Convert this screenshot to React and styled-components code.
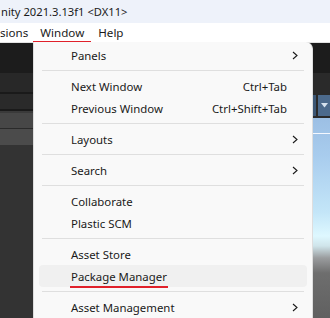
import React from "react";
import styled, { createGlobalStyle } from "styled-components";

const GlobalStyle = createGlobalStyle`
  body {
    margin: 0;
    overflow: hidden;
    font-family: "Noto Sans", "Liberation Sans", sans-serif;
  }
`;

const Screen = styled.div`
  position: relative;
  width: 330px;
  height: 318px;
  overflow: hidden;
  background-color: #333333;
  display: flex;
  flex-direction: column;
`;

const TitleBar = styled.div`
  height: 23px;
  background-color: #eef2fa;
  color: #1a1a1a;
  font-size: 11.2px;
  line-height: 23px;
  padding-left: 1px;
  white-space: nowrap;
`;

const MenuBar = styled.div`
  height: 19px;
  background-color: #ffffff;
  border-bottom: 1px solid #e2e2e2;
  display: flex;
  align-items: center;
  font-size: 11.6px;
  color: #1a1a1a;
`;

const MenuBarItem = styled.div`
  position: relative;
  height: 100%;
  display: flex;
  align-items: center;
  padding: 0 7px;
  &:first-child {
    padding-left: 0;
    padding-right: 5px;
  }
  &::after {
    content: "";
    display: ${(props) => (props.marked ? "block" : "none")};
    position: absolute;
    left: 0;
    right: 0;
    bottom: -1px;
    height: 2px;
    background-color: #e0202a;
  }
`;

const Editor = styled.div`
  flex: 1;
  display: flex;
  flex-direction: column;
`;

const Toolbar = styled.div`
  height: 30px;
  background-color: #1c1c1c;
`;

const Panels = styled.div`
  flex: 1;
  display: flex;
`;

const Hierarchy = styled.div`
  width: 33px;
  display: flex;
  flex-direction: column;
  background-color: #333333;
`;

const Stripe = styled.div`
  height: ${(props) => props.h}px;
  background-color: ${(props) => props.color};
`;

const Middle = styled.div`
  flex: 1;
  background-color: #282828;
`;

const SceneView = styled.div`
  width: 17px;
  display: flex;
  flex-direction: column;
`;

const SceneTabs = styled.div`
  height: 20px;
  background-color: #2a2a2a;
`;

const SceneToolbar = styled.div`
  height: 25px;
  background-color: #2a2a2a;
  display: flex;
  align-items: stretch;
  padding: 2px 0;
  box-sizing: border-box;
  gap: 2px;
`;

const ToolButton = styled.div`
  width: ${(props) => props.w}px;
  background-color: ${(props) => props.color};
  display: flex;
  align-items: center;
  justify-content: center;
`;

const Sky = styled.div`
  flex: 1;
  background: linear-gradient(
    to bottom,
    #9cbfe4 0px,
    #a9cdee 40px,
    #c4e6f8 95px,
    #def8ff 118px,
    #cfe4ea 128px,
    #9a9c9e 140px,
    #6e6e6e 155px,
    #606060 200px
  );
`;

const Horizon = styled.div`
  height: 1px;
  margin-top: 15px;
  background-color: #f4f8ff;
`;

const Menu = styled.div`
  position: absolute;
  left: 33px;
  top: 42px;
  width: 280px;
  height: 290px;
  box-sizing: border-box;
  background-color: #f9f9f9;
  border: 1px solid #dedede;
  border-top: none;
  border-radius: 0 7px 0 0;
  padding-top: 2px;
  font-size: 11.4px;
  color: #1a1a1a;
`;

const Item = styled.div`
  height: 22px;
  margin: 0 5px;
  border-radius: 4px;
  display: flex;
  align-items: center;
  padding-left: 32px;
  background-color: ${(props) => (props.hovered ? "#f0f0f0" : "transparent")};
`;

const Label = styled.span`
  flex: 1;
  white-space: nowrap;
`;

const LabelText = styled.span`
  position: relative;
  &::after {
    content: "";
    display: ${(props) => (props.marked ? "block" : "none")};
    position: absolute;
    left: -1px;
    right: -1px;
    bottom: -4px;
    height: 2px;
    background-color: #e0202a;
  }
`;

const Shortcut = styled.span`
  white-space: nowrap;
`;

const ArrowSlot = styled.span`
  width: 20px;
  height: 100%;
  display: flex;
  align-items: center;
  padding-left: 5px;
  box-sizing: border-box;
`;

const Separator = styled.div`
  height: 1px;
  margin: 4px 8px;
  background-color: #dfdfdf;
`;

function Chevron() {
  return (
    <svg width="6" height="9" viewBox="0 0 6 9">
      <polyline points="1,1 5,4.5 1,8" fill="none" stroke="#1a1a1a" strokeWidth="1.1" />
    </svg>
  );
}

const menu = [
  { label: "Panels", sub: true },
  "sep",
  { label: "Next Window", shortcut: "Ctrl+Tab" },
  { label: "Previous Window", shortcut: "Ctrl+Shift+Tab" },
  "sep",
  { label: "Layouts", sub: true },
  "sep",
  { label: "Search", sub: true },
  "sep",
  { label: "Collaborate" },
  { label: "Plastic SCM" },
  "sep",
  { label: "Asset Store" },
  { label: "Package Manager", hovered: true, marked: true },
  "sep",
  { label: "Asset Management", sub: true },
];

export default function App() {
  return (
    <Screen>
      <GlobalStyle />
      <TitleBar>nity 2021.3.13f1 &lt;DX11&gt;</TitleBar>
      <MenuBar>
        <MenuBarItem>sions</MenuBarItem>
        <MenuBarItem marked>Window</MenuBarItem>
        <MenuBarItem>Help</MenuBarItem>
      </MenuBar>
      <Editor>
        <Toolbar />
        <Panels>
          <Hierarchy>
            <Stripe h={19} color="#282828" />
            <Stripe h={2} color="#1a1a1a" />
            <Stripe h={15} color="#2a2a2a" />
            <Stripe h={2} color="#1a1a1a" />
            <Stripe h={2} color="#3a3a3a" />
            <Stripe h={15} color="#474747" />
            <Stripe h={1} color="#2a2a2a" />
            <Stripe h={16} color="#4b4b4b" />
          </Hierarchy>
          <Middle />
          <SceneView>
            <SceneTabs />
            <SceneToolbar>
              <ToolButton w={3} color="#3b5674" />
              <ToolButton w={12} color="#4c6a8c">
                <svg width="7" height="5" viewBox="0 0 7 5">
                  <polygon points="0,0 7,0 3.5,4.5" fill="#d6e2ee" />
                </svg>
              </ToolButton>
            </SceneToolbar>
            <Sky>
              <Horizon />
            </Sky>
          </SceneView>
        </Panels>
      </Editor>
      <Menu>
        {menu.map((entry, i) =>
          entry === "sep" ? (
            <Separator key={i} />
          ) : (
            <Item key={i} hovered={entry.hovered}>
              <Label>
                <LabelText marked={entry.marked}>{entry.label}</LabelText>
              </Label>
              {entry.shortcut && <Shortcut>{entry.shortcut}</Shortcut>}
              <ArrowSlot>{entry.sub && <Chevron />}</ArrowSlot>
            </Item>
          )
        )}
      </Menu>
    </Screen>
  );
}
